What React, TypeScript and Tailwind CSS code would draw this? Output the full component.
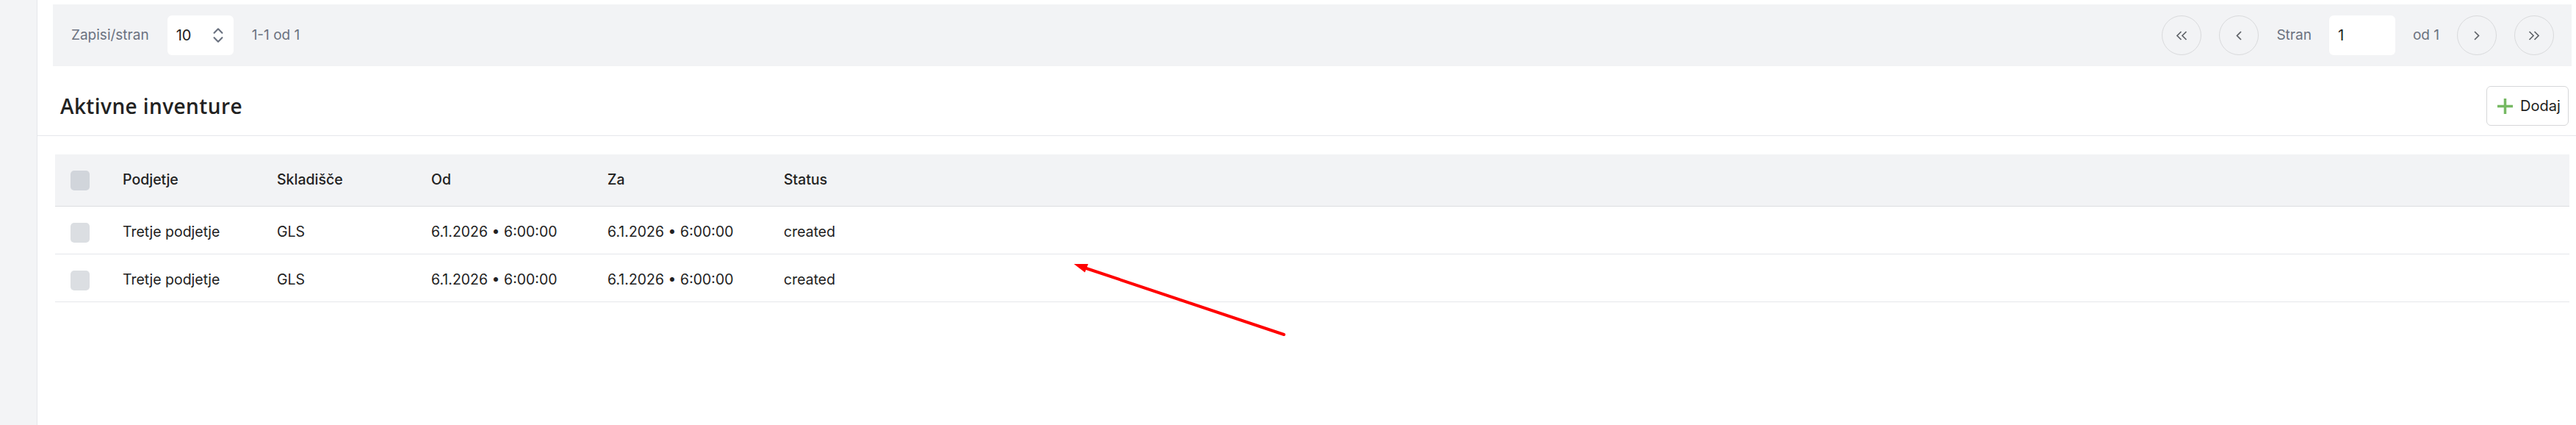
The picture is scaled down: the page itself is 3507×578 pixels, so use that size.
import { ChevronsUpDown } from 'lucide-react'

const rows = [
  { company: 'Tretje podjetje', warehouse: 'GLS', from: '6.1.2026 • 6:00:00', to: '6.1.2026 • 6:00:00', status: 'created' },
  { company: 'Tretje podjetje', warehouse: 'GLS', from: '6.1.2026 • 6:00:00', to: '6.1.2026 • 6:00:00', status: 'created' },
]

function Chevron({ double, dir }: { double?: boolean; dir: 'left' | 'right' }) {
  const flip = dir === 'right' ? 'scale-x-[-1]' : ''
  if (double) {
    return (
      <svg width="16" height="13" viewBox="0 0 16 13" fill="none" stroke="#5f6368" strokeWidth="1.7" className={flip}>
        <polyline points="7.5,1 2,6.5 7.5,12" />
        <polyline points="14.5,1 9,6.5 14.5,12" />
      </svg>
    )
  }
  return (
    <svg width="10" height="13" viewBox="0 0 10 13" fill="none" stroke="#5f6368" strokeWidth="1.7" className={flip}>
      <polyline points="8,1 2.5,6.5 8,12" />
    </svg>
  )
}

function PageButton({ double, dir }: { double?: boolean; dir: 'left' | 'right' }) {
  return (
    <button className="flex h-[54px] w-[54px] items-center justify-center rounded-full border border-[#d9dadc] bg-[#f2f3f5]">
      <Chevron double={double} dir={dir} />
    </button>
  )
}

export default function App() {
  return (
    <div className="relative flex h-[578px] w-[3507px] overflow-hidden bg-white font-['Inter',sans-serif]">
      {/* Sidebar strip */}
      <aside className="w-[51px] shrink-0 border-r border-[#e5e7eb] bg-[#f3f4f6]" />

      <main className="flex-1">
        {/* Pagination bar */}
        <div className="pl-[21px] pr-[6px] pt-[6px]">
          <div className="flex h-[84px] items-center justify-between bg-[#f2f3f5] pl-[25px] pr-[24px] text-[19px]">
            <div className="flex items-center gap-[25px]">
              <span className="text-[#6b7280]">Zapisi/stran</span>
              <div className="flex h-[54px] w-[90px] items-center justify-between rounded-[6px] bg-white pl-[12px] pr-[8px] text-[20px]">
                <span className="text-[#222]">10</span>
                <ChevronsUpDown size={26} strokeWidth={2} color="#6b7280" />
              </div>
              <span className="text-[#6b7280]">1-1 od 1</span>
            </div>
            <div className="flex items-center gap-[24px]">
              <PageButton double dir="left" />
              <PageButton dir="left" />
              <span className="text-[#6b7280]">Stran</span>
              <div className="flex h-[54px] w-[90px] items-center rounded-[6px] bg-white pl-[12px] text-[20px] text-[#222]">1</div>
              <span className="text-[#6b7280]">od 1</span>
              <PageButton dir="right" />
              <PageButton double dir="right" />
            </div>
          </div>
        </div>

        {/* Title row */}
        <div className="flex items-center justify-between border-b border-[#e5e7eb] pb-[13px] pl-[31px] pr-[10px] pt-[27px]">
          <h1 className="font-['Open_Sans',sans-serif] text-[28px] font-semibold tracking-[0.4px] text-[#222]">Aktivne inventure</h1>
          <button className="flex h-[54px] w-[112px] items-center gap-[10px] rounded-[6px] border border-[#d6d7d9] bg-white pl-[14px] text-[20px] text-[#222]">
            <svg width="21" height="21" viewBox="0 0 21 21" stroke="#76b963" strokeWidth="3.5">
              <line x1="10.5" y1="0" x2="10.5" y2="21" />
              <line x1="0" y1="10.5" x2="21" y2="10.5" />
            </svg>
            Dodaj
          </button>
        </div>

        {/* Table */}
        <div className="ml-[24px] mr-[9px] mt-[25px] text-[19.5px] text-[#222]">
          <div className="grid h-[71px] grid-cols-[71px_210px_210px_240px_240px_1fr] items-center border-b border-[#dcdde0] bg-[#f2f3f5] font-medium">
            <div className="pl-[21px]">
              <div className="h-[27px] w-[26px] rounded-[5px] bg-[#d1d5db]" />
            </div>
            <div className="pl-[21px]">Podjetje</div>
            <div className="pl-[21px]">Skladišče</div>
            <div className="pl-[21px]">Od</div>
            <div className="pl-[21px]">Za</div>
            <div className="pl-[21px]">Status</div>
          </div>
          {rows.map((r, i) => (
            <div key={i} className="grid h-[65px] grid-cols-[71px_210px_210px_240px_240px_1fr] items-center border-b border-[#e5e7eb] pt-[6px]">
              <div className="pl-[21px]">
                <div className="h-[27px] w-[26px] rounded-[5px] bg-[#dbdee2]" />
              </div>
              <div className="pl-[21px]">{r.company}</div>
              <div className="pl-[21px]">{r.warehouse}</div>
              <div className="pl-[21px]">{r.from}</div>
              <div className="pl-[21px]">{r.to}</div>
              <div className="pl-[21px]">{r.status}</div>
            </div>
          ))}
        </div>
      </main>

      {/* Red annotation arrow */}
      <svg className="pointer-events-none absolute inset-0" width="3507" height="578">
        <line x1="1748" y1="455" x2="1476" y2="364" stroke="#ff0000" strokeWidth="4" strokeLinecap="round" />
        <polygon points="1462,359 1481.5,359 1477,370.5" fill="#ff0000" />
      </svg>
    </div>
  )
}
